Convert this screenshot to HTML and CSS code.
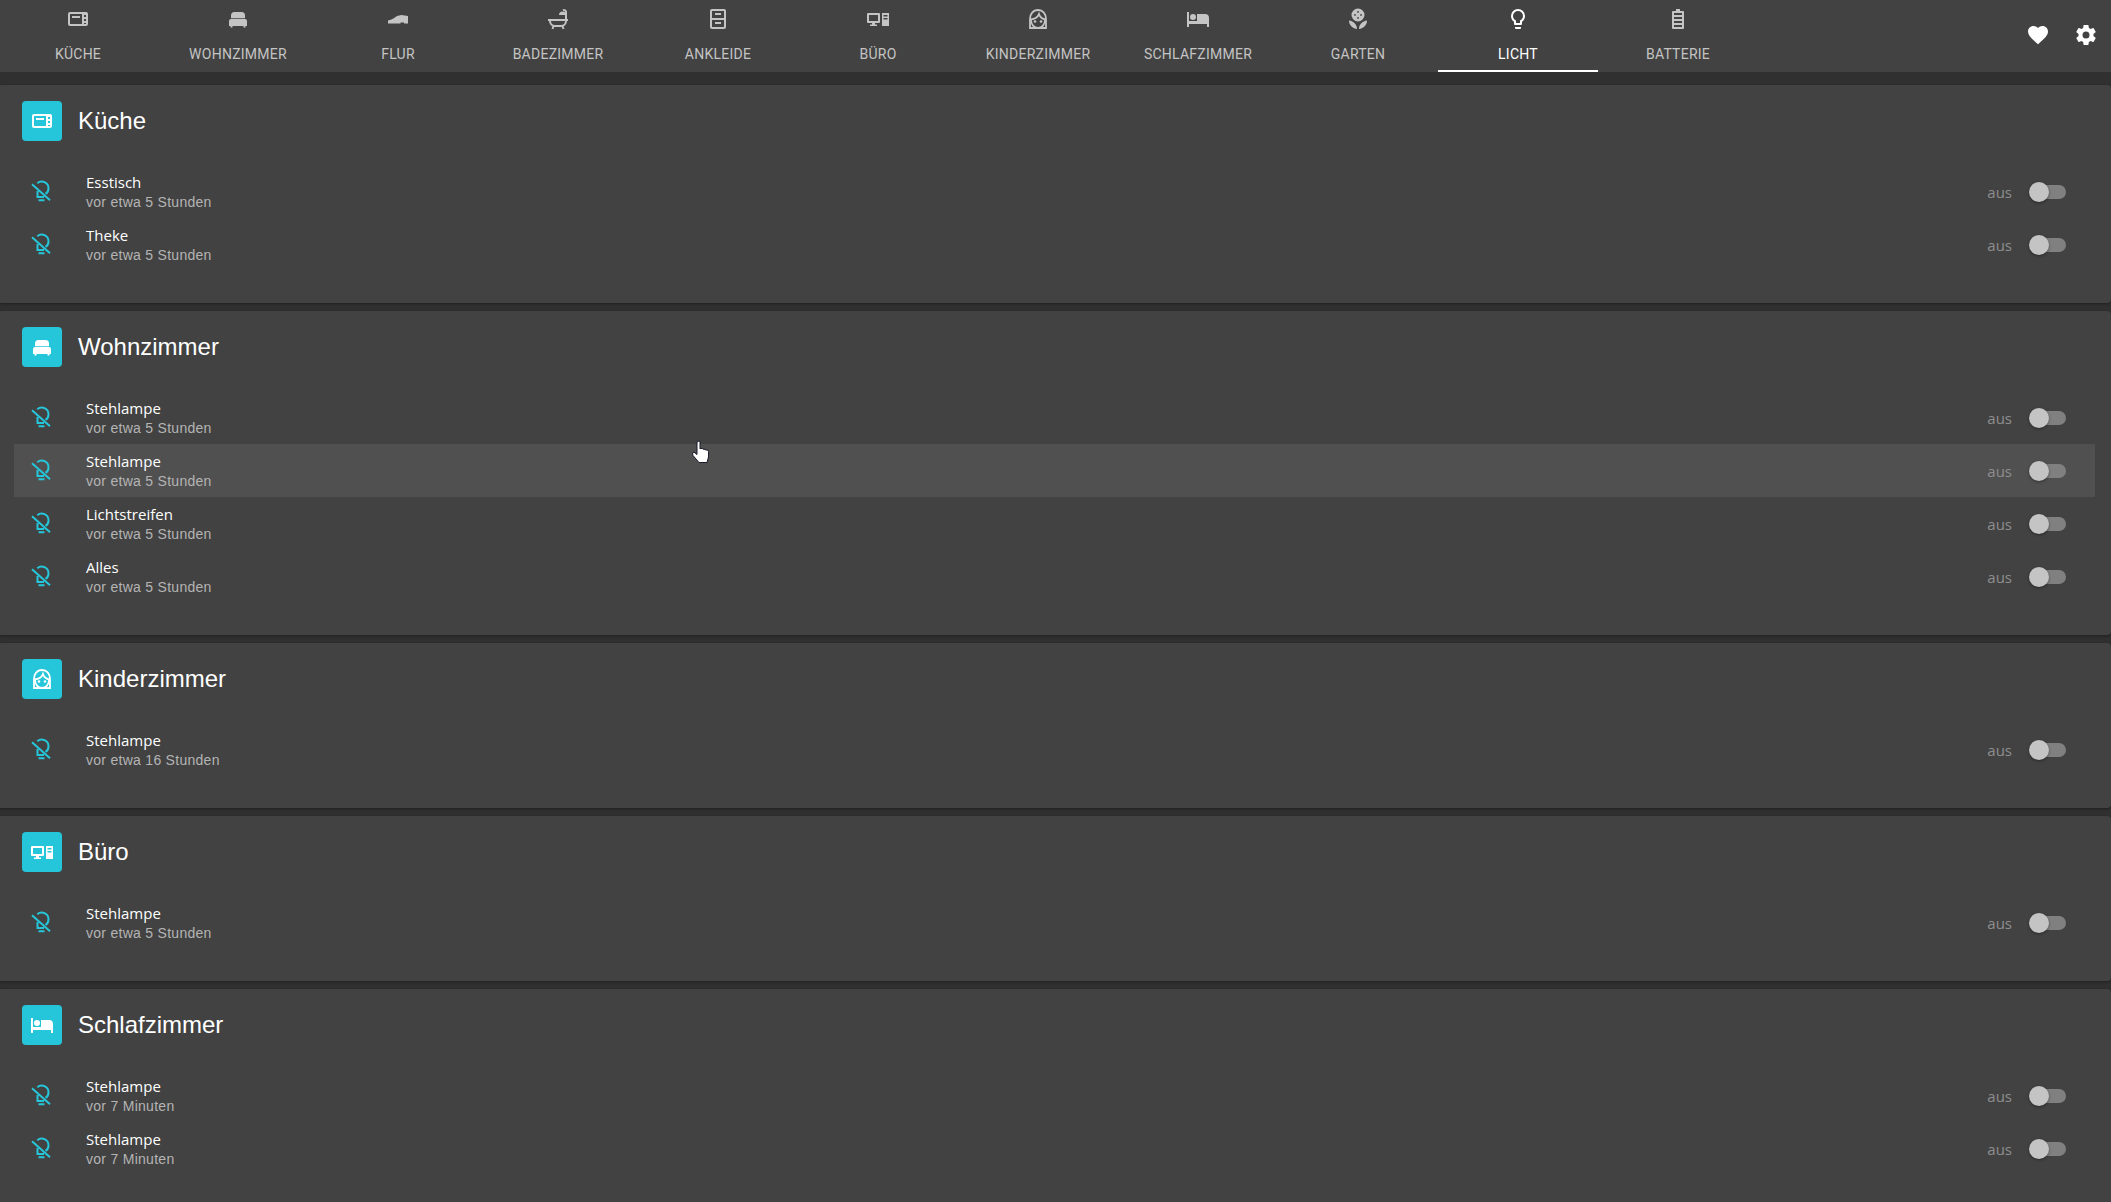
FILE: index.html
```html
<!DOCTYPE html>
<html lang="de">
<head>
<meta charset="utf-8">
<title>Licht</title>
<link rel="stylesheet" href="styles.css">
</head>
<body>
<svg class="defs" width="0" height="0" aria-hidden="true">
  <symbol id="i-microwave" viewBox="0 0 24 24"><path fill="currentColor" fill-rule="evenodd" d="M4 5h16a2 2 0 0 1 2 2v10a2 2 0 0 1-2 2H4a2 2 0 0 1-2-2V7a2 2 0 0 1 2-2zM4 7v10h12V7zM6 9h8v2H6zM18 8v2h2V8zM18 12v2h2v-2zM18 16v1h2v-1z"/></symbol>
  <symbol id="i-sofa" viewBox="0 0 24 24"><path fill="currentColor" d="M8.500 5h7A3.500 3.500 0 0 1 19 8.500V11.200H5V8.500A3.500 3.500 0 0 1 8.500 5zM5 12h14a2 2 0 0 1 2 2v4.500a.5.5 0 0 1-.5.5h-1v1.500h-2V19h-11v1.500h-2V19h-1a.5.5 0 0 1-.5-.5V14a2 2 0 0 1 2-2z"/></symbol>
  <symbol id="i-shoe" viewBox="0 0 24 24"><path fill="currentColor" d="M2 13.500C6 12.500 8 11 11 9L15.500 8L22 9V16.500H18V15.500H14.500V16.500H2z"/></symbol>
  <symbol id="i-bath" viewBox="0 0 24 24"><g fill="none" stroke="currentColor" stroke-width="2"><path d="M2 13h20M4 13v1a5 5 0 0 0 5 5h6a5 5 0 0 0 5-5v-1M7.500 19l-1 3M16.500 19l1 3M20 13V5a2 2 0 0 0-3-1.700"/></g><path fill="currentColor" d="M13 8a3.500 3.500 0 0 1 7 0z"/></symbol>
  <symbol id="i-cabinet" viewBox="0 0 24 24"><path fill="currentColor" fill-rule="evenodd" d="M6 2h12a2 2 0 0 1 2 2v16a2 2 0 0 1-2 2H6a2 2 0 0 1-2-2V4a2 2 0 0 1 2-2zM6 4v7h12V4zM6 13v7h12v-7zM9 6h6v2H9zM9 15h6v2H9z"/></symbol>
  <symbol id="i-desktop" viewBox="0 0 24 24"><path fill="currentColor" fill-rule="evenodd" d="M2 6h11a1 1 0 0 1 1 1v8a1 1 0 0 1-1 1H9v1.500h2V19H4v-1.500h2V16H2a1 1 0 0 1-1-1V7a1 1 0 0 1 1-1zM3 8v6h9V8zM16 6h7v13h-7zM17.500 8v1.500h4V8zM17.500 11v1.500h4V11z"/></symbol>
  <symbol id="i-face" viewBox="0 0 24 24"><g fill="none" stroke="currentColor" stroke-width="1.800"><path d="M12 3C7 3 4 7 4 12V21H20V12C20 7 17 3 12 3Z"/><path d="M4.500 12.500C9 12 12 10 13 7C14 10 16 12 19.500 12.500M5 13c0 4.500 3 8 7 8s7-3.500 7-8"/></g><circle cx="9" cy="14.500" r="1.300" fill="currentColor"/><circle cx="15" cy="14.500" r="1.300" fill="currentColor"/></symbol>
  <symbol id="i-bed" viewBox="0 0 24 24"><path fill="currentColor" d="M19,7H11V14H3V5H1V20H3V17H21V20H23V11A4,4 0 0,0 19,7M7,13A3,3 0 0,0 10,10A3,3 0 0,0 7,7A3,3 0 0,0 4,10A3,3 0 0,0 7,13Z"/></symbol>
  <symbol id="i-flower" viewBox="0 0 24 24"><path fill="currentColor" fill-rule="evenodd" d="M12 1.500a6.500 6.500 0 1 1 0 13a6.500 6.500 0 1 1 0-13zM12 4a.9.9 0 1 0 0 1.800a.9.9 0 1 0 0-1.800zM9 7a.9.9 0 1 0 0 1.800a.9.9 0 1 0 0-1.800zM15 7a.9.9 0 1 0 0 1.800a.9.9 0 1 0 0-1.800zM12 10a.9.9 0 1 0 0 1.800a.9.9 0 1 0 0-1.800z"/><path fill="currentColor" d="M3 13.500c0 4.500 3.500 8 8 8.500c0-4.500-3.500-8-8-8.500zM21 13.500c0 4.500-3.500 8-8 8.500c0-4.500 3.500-8 8-8.500z"/></symbol>
  <symbol id="i-bulb" viewBox="0 0 24 24"><path fill="currentColor" d="M12,2A7,7 0 0,1 19,9C19,11.380 17.810,13.470 16,14.740V17A1,1 0 0,1 15,18H9A1,1 0 0,1 8,17V14.740C6.190,13.470 5,11.380 5,9A7,7 0 0,1 12,2M9,21V20H15V21A1,1 0 0,1 14,22H10A1,1 0 0,1 9,21M12,4A5,5 0 0,0 7,9C7,11.050 8.230,12.810 10,13.580V16H14V13.580C15.770,12.810 17,11.050 17,9A5,5 0 0,0 12,4Z"/></symbol>
  <symbol id="i-battery" viewBox="0 0 24 24"><path fill="currentColor" fill-rule="evenodd" d="M10 2h4v2h3a1 1 0 0 1 1 1v16a1 1 0 0 1-1 1H7a1 1 0 0 1-1-1V5a1 1 0 0 1 1-1h3zM8 6v2h8V6zM8 10v2h8v-2zM8 14v2h8v-2zM8 18v2h8v-2z"/></symbol>
  <symbol id="i-heart" viewBox="0 0 24 24"><path fill="currentColor" d="M12,21.350L10.550,20.030C5.400,15.360 2,12.270 2,8.500C2,5.410 4.420,3 7.500,3C9.240,3 10.910,3.810 12,5.080C13.090,3.810 14.760,3 16.500,3C19.580,3 22,5.410 22,8.500C22,12.270 18.600,15.360 13.450,20.030L12,21.350Z"/></symbol>
  <symbol id="i-cog" viewBox="0 0 24 24"><path fill="currentColor" d="M12,15.500A3.500,3.500 0 0,1 8.500,12A3.500,3.500 0 0,1 12,8.500A3.500,3.500 0 0,1 15.500,12A3.500,3.500 0 0,1 12,15.500M19.430,12.970C19.470,12.650 19.500,12.330 19.500,12C19.500,11.670 19.470,11.340 19.430,11L21.540,9.370C21.730,9.220 21.780,8.950 21.660,8.730L19.660,5.270C19.540,5.050 19.270,4.960 19.050,5.050L16.560,6.050C16.040,5.660 15.500,5.320 14.870,5.070L14.500,2.420C14.460,2.180 14.250,2 14,2H10C9.750,2 9.540,2.180 9.500,2.420L9.130,5.070C8.500,5.320 7.960,5.660 7.440,6.050L4.950,5.050C4.730,4.960 4.460,5.050 4.340,5.270L2.340,8.730C2.210,8.950 2.270,9.220 2.460,9.370L4.570,11C4.530,11.340 4.500,11.670 4.500,12C4.500,12.330 4.530,12.650 4.570,12.970L2.460,14.630C2.270,14.780 2.210,15.050 2.340,15.270L4.340,18.730C4.460,18.950 4.730,19.030 4.950,18.950L7.440,17.940C7.960,18.340 8.500,18.680 9.130,18.930L9.500,21.580C9.540,21.820 9.750,22 10,22H14C14.250,22 14.460,21.820 14.500,21.580L14.870,18.930C15.500,18.670 16.040,18.340 16.560,17.940L19.050,18.950C19.270,19.030 19.540,18.950 19.660,18.730L21.660,15.270C21.780,15.050 21.730,14.780 21.540,14.630L19.430,12.970Z"/></symbol>
  <symbol id="i-bulb-off" viewBox="0 0 24 24"><g fill="none" stroke="currentColor" stroke-width="2"><path d="M2 4.200L20 20.200M7.300 3.200A6.800 6.800 0 0 1 18.500 8.400c0 2.300-1.100 4.300-3 5.500M7.500 10.900V16.900H14M8.500 20.200h6"/></g></symbol>
</svg>

<header class="topbar">
  <nav class="tabs">
    <a class="tab"><svg class="tab-icon"><use href="#i-microwave"/></svg><span>Küche</span></a>
    <a class="tab"><svg class="tab-icon"><use href="#i-sofa"/></svg><span>Wohnzimmer</span></a>
    <a class="tab"><svg class="tab-icon"><use href="#i-shoe"/></svg><span>Flur</span></a>
    <a class="tab"><svg class="tab-icon"><use href="#i-bath"/></svg><span>Badezimmer</span></a>
    <a class="tab"><svg class="tab-icon"><use href="#i-cabinet"/></svg><span>Ankleide</span></a>
    <a class="tab"><svg class="tab-icon"><use href="#i-desktop"/></svg><span>Büro</span></a>
    <a class="tab"><svg class="tab-icon"><use href="#i-face"/></svg><span>Kinderzimmer</span></a>
    <a class="tab"><svg class="tab-icon"><use href="#i-bed"/></svg><span>Schlafzimmer</span></a>
    <a class="tab"><svg class="tab-icon"><use href="#i-flower"/></svg><span>Garten</span></a>
    <a class="tab tab-active"><svg class="tab-icon"><use href="#i-bulb"/></svg><span>Licht</span></a>
    <a class="tab"><svg class="tab-icon"><use href="#i-battery"/></svg><span>Batterie</span></a>
  </nav>
  <div class="actions">
    <button class="action"><svg class="tab-icon"><use href="#i-heart"/></svg></button>
    <button class="action"><svg class="tab-icon"><use href="#i-cog"/></svg></button>
  </div>
</header>

<main class="cards">
  <section class="card">
    <h2 class="card-head"><span class="tile"><svg class="tab-icon"><use href="#i-microwave"/></svg></span>Küche</h2>
    <div class="row"><svg class="row-icon"><use href="#i-bulb-off"/></svg><div class="row-text"><div class="row-title">Esstisch</div><div class="row-sub">vor etwa 5 Stunden</div></div><span class="state">aus</span><span class="toggle"></span></div>
    <div class="row"><svg class="row-icon"><use href="#i-bulb-off"/></svg><div class="row-text"><div class="row-title">Theke</div><div class="row-sub">vor etwa 5 Stunden</div></div><span class="state">aus</span><span class="toggle"></span></div>
  </section>
  <section class="card">
    <h2 class="card-head"><span class="tile"><svg class="tab-icon"><use href="#i-sofa"/></svg></span>Wohnzimmer</h2>
    <div class="row"><svg class="row-icon"><use href="#i-bulb-off"/></svg><div class="row-text"><div class="row-title">Stehlampe</div><div class="row-sub">vor etwa 5 Stunden</div></div><span class="state">aus</span><span class="toggle"></span></div>
    <div class="row row-hover"><svg class="row-icon"><use href="#i-bulb-off"/></svg><div class="row-text"><div class="row-title">Stehlampe</div><div class="row-sub">vor etwa 5 Stunden</div></div><span class="state">aus</span><span class="toggle"></span></div>
    <div class="row"><svg class="row-icon"><use href="#i-bulb-off"/></svg><div class="row-text"><div class="row-title">Lichtstreifen</div><div class="row-sub">vor etwa 5 Stunden</div></div><span class="state">aus</span><span class="toggle"></span></div>
    <div class="row"><svg class="row-icon"><use href="#i-bulb-off"/></svg><div class="row-text"><div class="row-title">Alles</div><div class="row-sub">vor etwa 5 Stunden</div></div><span class="state">aus</span><span class="toggle"></span></div>
  </section>
  <section class="card">
    <h2 class="card-head"><span class="tile"><svg class="tab-icon"><use href="#i-face"/></svg></span>Kinderzimmer</h2>
    <div class="row"><svg class="row-icon"><use href="#i-bulb-off"/></svg><div class="row-text"><div class="row-title">Stehlampe</div><div class="row-sub">vor etwa 16 Stunden</div></div><span class="state">aus</span><span class="toggle"></span></div>
  </section>
  <section class="card">
    <h2 class="card-head"><span class="tile"><svg class="tab-icon"><use href="#i-desktop"/></svg></span>Büro</h2>
    <div class="row"><svg class="row-icon"><use href="#i-bulb-off"/></svg><div class="row-text"><div class="row-title">Stehlampe</div><div class="row-sub">vor etwa 5 Stunden</div></div><span class="state">aus</span><span class="toggle"></span></div>
  </section>
  <section class="card">
    <h2 class="card-head"><span class="tile"><svg class="tab-icon"><use href="#i-bed"/></svg></span>Schlafzimmer</h2>
    <div class="row"><svg class="row-icon"><use href="#i-bulb-off"/></svg><div class="row-text"><div class="row-title">Stehlampe</div><div class="row-sub">vor 7 Minuten</div></div><span class="state">aus</span><span class="toggle"></span></div>
    <div class="row"><svg class="row-icon"><use href="#i-bulb-off"/></svg><div class="row-text"><div class="row-title">Stehlampe</div><div class="row-sub">vor 7 Minuten</div></div><span class="state">aus</span><span class="toggle"></span></div>
  </section>
</main>

<svg class="cursor" viewBox="0 0 18 24" width="18" height="24" aria-hidden="true"><path fill="#fff" stroke="#1a1a2a" stroke-width="1" stroke-linejoin="round" d="M6 1.500a1.300 1.300 0 0 1 2 0V9l.5-.5h2l.5.7h2l.5.8h2l1 1.500V17l-1.500 5.500H7L1 15.500.5 13l1.500-.8L5 14.500V2z"/></svg>
</body>
</html>
```

FILE: styles.css
```css
* { box-sizing: border-box; }

html, body {
  margin: 0;
  height: 100%;
  overflow: hidden;
  background: #303030;
}

body {
  font-family: "Liberation Sans", Arial, sans-serif;
  color: #fff;
  position: relative;
}

.defs { position: absolute; }

.topbar {
  display: flex;
  height: 72px;
  background: #424242;
  padding-right: 1px;
  margin-bottom: 13px;
}

.tabs {
  display: flex;
  flex: 1;
  margin-left: -2px;
}

.tab {
  width: 160px;
  height: 72px;
  padding-top: 7px;
  display: flex;
  flex-direction: column;
  align-items: center;
  color: #c4c4c4;
  font-family: Roboto, sans-serif;
  font-size: 14px;
  letter-spacing: .25px;
  line-height: 16px;
  text-transform: uppercase;
}

.tab span { margin-top: 15px; }

.tab-active {
  color: #fff;
  border-bottom: 2px solid #fff;
}

.tab-icon {
  width: 24px;
  height: 24px;
  display: block;
  flex: none;
}

.actions { display: flex; align-items: center; }

.action {
  width: 48px;
  height: 48px;
  padding: 11px 12px 13px;
  border: 0;
  background: none;
  color: #fff;
}

.cards {
  display: flex;
  flex-direction: column;
  gap: 8px;
  margin-left: -2px;
}

.card {
  background: #424242;
  border-radius: 4px;
  padding: 16px 16px 32px;
  box-shadow: 0 1px 3px rgba(0, 0, 0, .35);
}

.card-head {
  display: flex;
  align-items: center;
  gap: 16px;
  height: 40px;
  margin: 0 0 24px 8px;
  font-size: 24px;
  font-weight: 400;
  color: #fff;
}

.tile {
  width: 40px;
  height: 40px;
  padding: 8px;
  border-radius: 4px;
  background: #26c6da;
  color: #fff;
}

.row {
  display: flex;
  align-items: center;
  height: 53px;
  padding: 0 29px 0 16px;
}

.row-hover { background: #505050; }

.row-icon {
  width: 24px;
  height: 24px;
  flex: none;
  color: #26c6da;
  margin-right: 32px;
}

.row-text { flex: 1; }

.row-title {
  font-family: "Open Sans", sans-serif;
  font-size: 15px;
  line-height: 20px;
  color: #fff;
}

.row-sub {
  font-size: 14px;
  letter-spacing: .28px;
  line-height: 19px;
  padding-top: 1px;
  margin-bottom: -1px;
  color: #b4b4b4;
}

.state {
  font-family: "Open Sans", sans-serif;
  font-size: 15px;
  color: #8e8e8e;
  margin-right: 17px;
}

.toggle {
  position: relative;
  width: 37px;
  height: 14px;
  flex: none;
}

.toggle::before {
  content: "";
  position: absolute;
  left: 3px;
  right: 0;
  top: 0;
  bottom: 0;
  border-radius: 7px;
  background: #808080;
}

.toggle::after {
  content: "";
  position: absolute;
  left: 0;
  top: -3px;
  width: 20px;
  height: 20px;
  border-radius: 50%;
  background: #c4c4c4;
  box-shadow: 0 1px 3px rgba(0, 0, 0, .4);
}

.cursor {
  position: absolute;
  left: 692px;
  top: 440px;
}
```
